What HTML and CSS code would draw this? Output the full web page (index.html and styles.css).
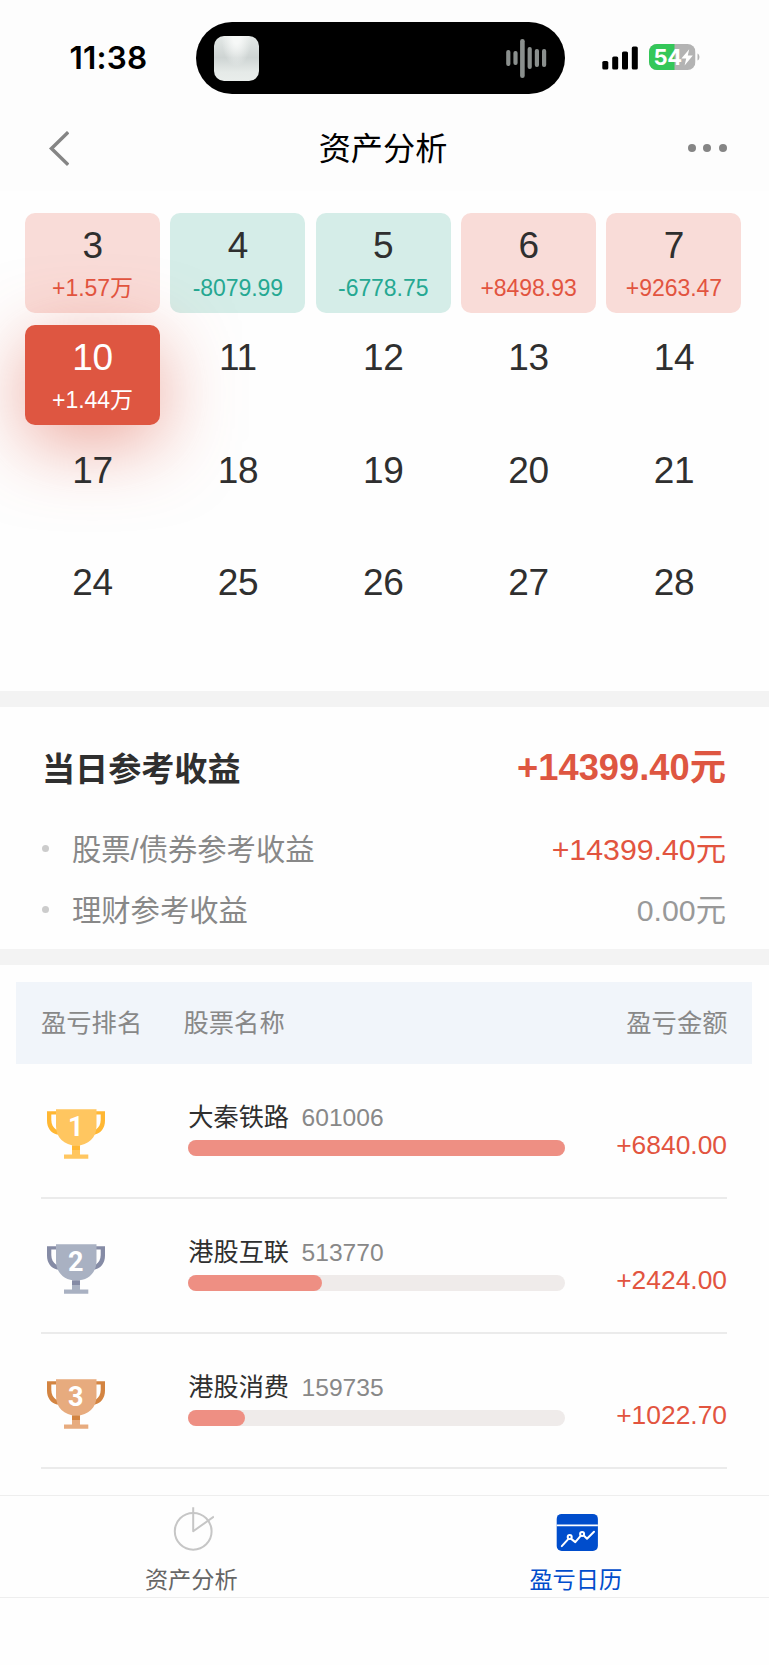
FILE: index.html
```html
<!DOCTYPE html>
<html lang="zh-CN">
<head>
<meta charset="utf-8">
<title>资产分析</title>
<link rel="stylesheet" href="styles.css">
</head>
<body>
<svg width="0" height="0" class="defs">
  <symbol id="handles" viewBox="0 0 58 50">
    <path d="M0 2.300H9V5.500H4.300V11C4.300 15.500 6.300 18.500 9 20.500H49C51.700 18.500 53.700 15.500 53.700 11V5.500H49V2.300H58V11.500C58 19 54 24 48 25.500H10C4 24 0 19 0 11.500Z"/>
  </symbol>
  <symbol id="bowl" viewBox="0 0 58 50">
    <path d="M9 .3H49.500V17c0 11.500-8 19.500-20.200 19.500S9 28.500 9 17zM25 40.500h8v5h8.300v4.200H17v-4.200h8z"/>
  </symbol>
</svg>
<div class="app">
  <header class="header">
    <div class="status">
      <div class="clock">11:38</div>
      <div class="island">
        <div class="cover"></div>
        <svg class="wave" width="42" height="42" viewBox="0 0 42 42" fill="#8a8f8d">
          <rect x="0.2" y="12" width="4.2" height="16" rx="2"/>
          <rect x="7.4" y="13" width="4.2" height="14" rx="2"/>
          <rect x="14.1" y="1" width="4.6" height="39" rx="2.3"/>
          <rect x="21.6" y="9" width="4.2" height="22" rx="2"/>
          <rect x="28.8" y="11" width="4.2" height="18" rx="2"/>
          <rect x="36" y="11" width="4.2" height="18" rx="2"/>
        </svg>
      </div>
      <svg class="signal" width="36" height="24" viewBox="0 0 36 24">
        <rect x="0.3" y="15" width="6" height="8.5" rx="1.6"/>
        <rect x="10.2" y="10.5" width="6" height="13" rx="1.6"/>
        <rect x="20" y="5.5" width="6" height="18" rx="1.6"/>
        <rect x="29.8" y="0.5" width="6" height="23" rx="1.6"/>
      </svg>
      <svg class="battery" width="52" height="26" viewBox="0 0 52 26">
        <clipPath id="cell"><rect width="46.5" height="26" rx="8"/></clipPath>
        <g clip-path="url(#cell)">
          <rect width="46.5" height="26" fill="#b3b3b3"/>
          <rect width="25.5" height="26" fill="#34c759"/>
        </g>
        <path d="M48.5 9.500c2.600 1 2.600 6 0 7z" fill="#b3b3b3"/>
        <text x="4.600" y="20.600" class="battery-level">54</text>
        <path d="M40.200 5.200 32.400 14.400h4.800L35.600 21.400 43.800 11.600h-5z" fill="#fff"/>
      </svg>
    </div>
    <div class="nav">
      <svg class="back" width="22" height="36" viewBox="0 0 22 36"><path d="M21.200 1.200 4.500 17.500l16.700 16.300" fill="none" stroke="#858585" stroke-width="3.500"/></svg>
      <h1 class="title">资产分析</h1>
      <div class="more"><i></i><i></i><i></i></div>
    </div>
  </header>

  <main class="main">
    <section class="calendar">
      <div class="day up"><b>3</b><span>+1.57万</span></div>
      <div class="day down"><b>4</b><span>-8079.99</span></div>
      <div class="day down"><b>5</b><span>-6778.75</span></div>
      <div class="day up"><b>6</b><span>+8498.93</span></div>
      <div class="day up"><b>7</b><span>+9263.47</span></div>
      <div class="day selected"><b>10</b><span>+1.44万</span></div>
      <div class="day"><b>11</b></div>
      <div class="day"><b>12</b></div>
      <div class="day"><b>13</b></div>
      <div class="day"><b>14</b></div>
      <div class="day"><b>17</b></div>
      <div class="day"><b>18</b></div>
      <div class="day"><b>19</b></div>
      <div class="day"><b>20</b></div>
      <div class="day"><b>21</b></div>
      <div class="day"><b>24</b></div>
      <div class="day"><b>25</b></div>
      <div class="day"><b>26</b></div>
      <div class="day"><b>27</b></div>
      <div class="day"><b>28</b></div>
    </section>

    <section class="summary">
      <div class="total"><h2>当日参考收益</h2><strong>+14399.40元</strong></div>
      <div class="item"><span class="label">股票/债券参考收益</span><span class="value red">+14399.40元</span></div>
      <div class="item"><span class="label">理财参考收益</span><span class="value">0.00元</span></div>
    </section>

    <section class="ranking">
      <div class="rank-head"><span class="c1">盈亏排名</span><span class="c2">股票名称</span><span class="c3">盈亏金额</span></div>
      <div class="rank-row gold">
        <svg class="cup" width="58" height="50" viewBox="0 0 58 50">
          <use href="#handles" class="dark"/>
          <use href="#bowl" class="light"/>
          <path class="dark" d="M25 36.300h8V41h-8z"/>
          <text x="28.800" y="27" class="cup-no">1</text>
        </svg>
        <div class="stock">
          <div class="name">大秦铁路<em>601006</em></div>
          <div class="bar"><div class="fill" style="width:100%"></div></div>
        </div>
        <div class="amount">+6840.00</div>
      </div>
      <div class="rank-row silver">
        <svg class="cup" width="58" height="50" viewBox="0 0 58 50">
          <use href="#handles" class="dark"/>
          <use href="#bowl" class="light"/>
          <path class="dark" d="M25 36.300h8V41h-8z"/>
          <text x="28.800" y="27" class="cup-no">2</text>
        </svg>
        <div class="stock">
          <div class="name">港股互联<em>513770</em></div>
          <div class="bar"><div class="fill" style="width:35.44%"></div></div>
        </div>
        <div class="amount">+2424.00</div>
      </div>
      <div class="rank-row bronze">
        <svg class="cup" width="58" height="50" viewBox="0 0 58 50">
          <use href="#handles" class="dark"/>
          <use href="#bowl" class="light"/>
          <path class="dark" d="M25 36.300h8V41h-8z"/>
          <text x="28.800" y="27" class="cup-no">3</text>
        </svg>
        <div class="stock">
          <div class="name">港股消费<em>159735</em></div>
          <div class="bar"><div class="fill" style="width:14.95%"></div></div>
        </div>
        <div class="amount">+1022.70</div>
      </div>
    </section>
  </main>

  <nav class="tabs">
    <div class="tab">
      <svg width="44" height="48" viewBox="0 0 44 48" fill="none" stroke="#c6c6c6" stroke-width="2" stroke-linejoin="round"><circle cx="23.200" cy="27.300" r="18.400"/><path d="M23.200 3.300v24L43.900 12.500"/></svg>
      <span>资产分析</span>
    </div>
    <div class="tab active">
      <svg width="44" height="48" viewBox="0 0 44 48" fill="none" stroke="#fff">
        <rect x="1.700" y="9.900" width="41.200" height="37" rx="5" fill="#004dcc" stroke="none"/>
        <path d="M1.700 21.400h41.200" stroke-width="1.800"/>
        <g stroke-width="2" stroke-linecap="round" stroke-linejoin="round"><path d="M6.800 42.100 13.200 35.100M16.500 35.100l3.800 3 5.100-6M29 31.800l3 3 7-7"/><circle cx="14.700" cy="33.100" r="2"/><circle cx="27.100" cy="30.100" r="2"/></g>
      </svg>
      <span>盈亏日历</span>
    </div>
  </nav>
</div>
</body>
</html>
```
FILE: styles.css
```css
* { box-sizing: border-box; }
body {
  margin: 0;
  background: #fefefe;
  font-family: "Liberation Sans", "Noto Sans CJK SC", sans-serif;
  color: #2f2f2f;
}
.defs { display: block; }
.app { width: 769px; height: 1665px; display: flex; flex-direction: column; overflow: hidden; }

.header { height: 191px; flex: none; background: #fdfdfd; }
.status { height: 94px; padding: 22px 0 0 69.500px; display: flex; align-items: flex-start; }
.clock {
  width: 126.500px;
  padding-top: 18px;
  font: 600 31.500px/36px Inter, sans-serif;
  letter-spacing: 0.200px;
  color: #000;
}
.island {
  width: 369px;
  height: 72px;
  padding: 0 17px 0 17.500px;
  border-radius: 36px;
  background: #000;
  display: flex;
  align-items: center;
  justify-content: space-between;
}
.cover {
  width: 45px;
  height: 45px;
  border-radius: 10px;
  background: radial-gradient(ellipse at 50% 0, #f6f8f7 0 12%, transparent 48%), linear-gradient(#e3e8e6, #ced4d3 48%, #e5eae8 80%, #e9edeb);
}
.wave { margin-top: 2px; }
.signal { margin: 23.500px 0 0 37px; }
.battery { margin: 22px 0 0 10.500px; }
.battery-level { font: 700 22px Inter, sans-serif; letter-spacing: -0.500px; fill: #fff; }
.nav {
  height: 97px;
  padding: 0 42px 0 47px;
  display: grid;
  grid-template-columns: 88px 1fr 96px;
  align-items: center;
}
.back { margin-top: 12px; }
.title { margin: 13px 0 0; font-size: 32.200px; line-height: 48px; font-weight: 400; text-align: center; color: #000; }
.more { margin-top: 11px; display: flex; gap: 7.600px; justify-content: flex-end; }
.more i { width: 8px; height: 8px; border-radius: 50%; background: #858585; }

.main { flex: 1; min-height: 0; }
.calendar {
  height: 500px;
  padding: 21.500px 27.500px 0 25px;
  display: grid;
  grid-template-columns: repeat(5, 1fr);
  grid-auto-rows: 100.300px;
  gap: 12.200px 10.200px;
}
.day { border-radius: 10px; padding-top: 12.500px; text-align: center; }
.day b { display: block; font-size: 37px; line-height: 41px; font-weight: 400; letter-spacing: -0.300px; }
.day span { display: block; margin-top: 6.500px; font-size: 23px; line-height: 30px; letter-spacing: -0.050px; }
.up { background: #f9dcd8; }
.up span { color: #e2543f; }
.down { background: #d5ede8; }
.down span { color: #25a892; }
.selected { background: #de5641; color: #fff; box-shadow: 0 18px 74px rgba(221, 86, 65, 0.520); }

.summary {
  height: 274px;
  padding: 28px 43px 0 42px;
  border: solid #f3f3f3;
  border-width: 16px 0;
}
.total { height: 66px; display: flex; justify-content: space-between; align-items: center; }
.total h2 { margin: 3px 0 0; font-size: 33.100px; line-height: 50px; }
.total strong { margin-top: -1px; font-size: 36.300px; line-height: 50px; color: #de5641; }
.item { height: 61.300px; display: flex; align-items: center; color: #888; }
.total + .item { margin-top: 17px; }
.item::before { content: ""; width: 7px; height: 7px; margin-right: 23px; border-radius: 50%; background: #ccc; }
.label { flex: 1; margin-top: 2px; font-size: 29.300px; line-height: 44px; }
.value { margin-top: 2px; font-size: 30.300px; line-height: 44px; color: #999; }
.value.red { color: #e2543f; }

.ranking { padding: 17px 17px 0 16px; }
.rank-head {
  height: 81.500px;
  padding: 0 24.500px 3px 25px;
  background: #f1f5fa;
  display: flex;
  align-items: center;
  font-size: 25.300px;
  color: #888;
}
.c1 { width: 142.500px; }
.c2 { flex: 1; }
.rank-row {
  height: 135px;
  margin: 0 25px;
  border-bottom: 2px solid #ebebeb;
  display: flex;
}
.cup { flex: none; margin: 45px 83.300px 0 6px; }
.cup-no { font: 700 27px Roboto, sans-serif; text-anchor: middle; fill: #fff; }
.gold .light { fill: #ffc660; }
.gold .dark { fill: #ffb733; }
.silver .light { fill: #a9b1c2; }
.silver .dark { fill: #858ba5; }
.bronze .light { fill: #e7ab7e; }
.bronze .dark { fill: #d38441; }
.stock { width: 377px; padding-top: 33.500px; }
.name { height: 43px; line-height: 40px; font-size: 25.200px; white-space: nowrap; }
.name em { margin-left: 12.500px; font-size: 24.600px; font-style: normal; color: #888; }
.bar { height: 16px; border-radius: 8px; background: #efebea; }
.fill { height: 16px; border-radius: 8px; background: #ee8f83; }
.amount { flex: 1; padding-top: 61.500px; text-align: right; font-size: 26.400px; line-height: 40px; color: #e2543f; }

.tabs {
  flex: none;
  height: 170px;
  display: flex;
  align-items: flex-start;
  background: #fefefe;
}
.tab {
  flex: 1;
  height: 103px;
  padding-top: 8px;
  border: solid #eee;
  border-width: 1.500px 0;
  display: flex;
  flex-direction: column;
  align-items: center;
  font-size: 23.200px;
  line-height: 34px;
  color: #666;
}
.tab span { margin: 11px 2px 0 0; }
.active { color: #004dcc; }
```
